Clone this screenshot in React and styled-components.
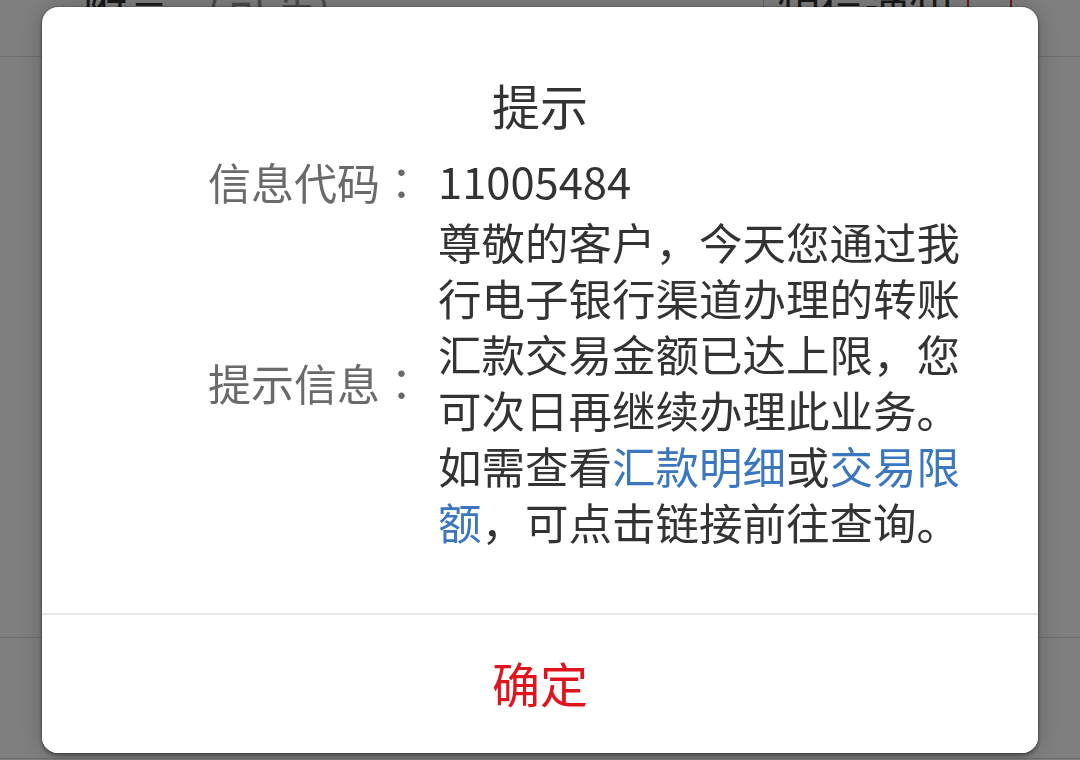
import React from 'react';
import styled, { createGlobalStyle } from 'styled-components';

const GlobalStyle = createGlobalStyle`
  html, body {
    margin: 0;
    padding: 0;
    background: #ffffff;
    font-family: "Noto Sans CJK SC", "Noto Sans", sans-serif;
  }
`;

const Page = styled.div`
  width: 1080px;
  height: 760px;
  overflow: hidden;
  background: #ffffff;
`;

const FormList = styled.div`
  margin-top: -40px;
`;

const FormRow = styled.div`
  display: flex;
  align-items: stretch;
  height: ${(p) => p.height || 96}px;
  border-bottom: 1px solid #dddddd;
`;

const FieldLabel = styled.div`
  flex: 1;
  display: flex;
  align-items: center;
  padding-left: 83px;
  font-size: 44px;
  color: #333333;
`;

const Hint = styled.span`
  color: #999999;
  margin-left: 10px;
`;

const SideCell = styled.div`
  width: 303px;
  display: flex;
  align-items: center;
  padding-left: 13px;
  border-left: 1px solid #cccccc;
  font-size: 44px;
  color: #333333;
`;

const RedBox = styled.span`
  width: 41px;
  height: 60px;
  margin-left: 14px;
  border-left: 2px solid #e3303a;
  border-right: 2px solid #e3303a;
`;

const Overlay = styled.div`
  position: fixed;
  inset: 0;
  background: rgba(0, 0, 0, 0.5);
  display: flex;
  align-items: center;
  justify-content: center;
`;

const Dialog = styled.div`
  width: 996px;
  background: #ffffff;
  border-radius: 16px;
  box-shadow: 0 0 2px rgba(0, 0, 0, 0.55), 0 3px 4px rgba(0, 0, 0, 0.35),
    0 0 26px rgba(0, 0, 0, 0.22);
  display: flex;
  flex-direction: column;
  overflow: hidden;
`;

const Body = styled.div`
  padding: 67px 0 63px;
  display: flex;
  flex-direction: column;
`;

const Title = styled.div`
  text-align: center;
  font-size: 48px;
  line-height: 60px;
  color: #333333;
  margin-bottom: 19px;
`;

const InfoRow = styled.div`
  display: flex;
  align-items: center;
  padding-left: 166px;
  margin-top: ${(p) => p.gap || 0}px;
`;

const Label = styled.div`
  width: 220px;
  flex-shrink: 0;
  font-size: 43px;
  line-height: 56px;
  color: #6a6a6a;
  white-space: nowrap;
`;

const Colon = styled.span`
  font-family: "Noto Sans CJK TC", "Noto Sans CJK SC", sans-serif;
`;

const Value = styled.div`
  margin-left: 10px;
  width: 530px;
  font-size: 43.5px;
  line-height: 56px;
  color: #333333;
`;

const Link = styled.span`
  color: #3b76c0;
`;

const Divider = styled.div`
  height: 2px;
  background: #e6e6e6;
`;

const ConfirmButton = styled.button`
  height: 138px;
  border: none;
  background: #ffffff;
  padding: 0 0 4px;
  margin: 0;
  font-family: inherit;
  font-size: 48px;
  color: #e0141c;
  cursor: pointer;
`;

export default function App() {
  return (
    <>
      <GlobalStyle />
      <Page>
        <FormList>
          <FormRow height={96}>
            <FieldLabel>
              附言<Hint>（可选）</Hint>
            </FieldLabel>
            <SideCell>
              短信通知
              <RedBox />
            </SideCell>
          </FormRow>
          <FormRow height={580} />
          <FormRow height={120} />
        </FormList>
      </Page>
      <Overlay>
        <Dialog>
          <Body>
            <Title>提示</Title>
            <InfoRow>
              <Label>
                信息代码<Colon>：</Colon>
              </Label>
              <Value>11005484</Value>
            </InfoRow>
            <InfoRow gap={5}>
              <Label>
                提示信息<Colon>：</Colon>
              </Label>
              <Value>
                尊敬的客户，今天您通过我行电子银行渠道办理的转账汇款交易金额已达上限，您可次日再继续办理此业务。如需查看
                <Link>汇款明细</Link>或<Link>交易限额</Link>，可点击链接前往查询。
              </Value>
            </InfoRow>
          </Body>
          <Divider />
          <ConfirmButton>确定</ConfirmButton>
        </Dialog>
      </Overlay>
    </>
  );
}
